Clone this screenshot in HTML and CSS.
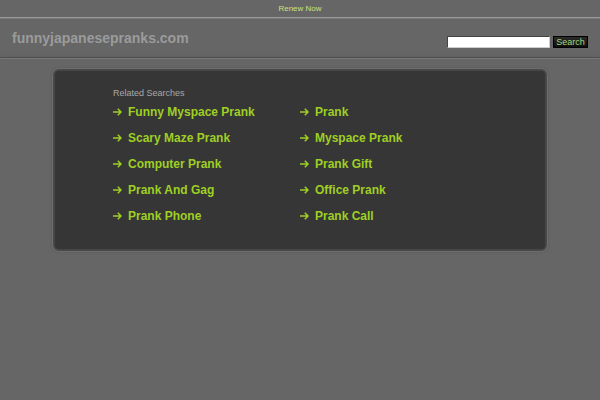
FILE: index.html
```html
<!DOCTYPE html>
<html lang="en">
<head>
    <meta name="viewport" content="width=device-width, initial-scale=1">
    <title>funnyjapanesepranks.com</title>
    <link rel="stylesheet" href="styles.css">
</head>
<body>

<div class="topbar">
    <a href="#" class="renew">Renew Now</a>
</div>

<div class="header">
    <div class="domain">funnyjapanesepranks.com</div>
    <form class="search" onsubmit="return false">
        <input type="text" class="search-input">
        <button type="submit" class="search-button">Search</button>
    </form>
</div>

<div class="content">
    <div class="box">
        <h4 class="box-title">Related Searches</h4>
        <ul class="links">
            <li><a href="#"><svg class="arrow" viewBox="0 0 9 8"><path d="M0 4H8M4.8 0.8L8 4L4.8 7.2"/></svg>Funny Myspace Prank</a></li>
            <li><a href="#"><svg class="arrow" viewBox="0 0 9 8"><path d="M0 4H8M4.8 0.8L8 4L4.8 7.2"/></svg>Scary Maze Prank</a></li>
            <li><a href="#"><svg class="arrow" viewBox="0 0 9 8"><path d="M0 4H8M4.8 0.8L8 4L4.8 7.2"/></svg>Computer Prank</a></li>
            <li><a href="#"><svg class="arrow" viewBox="0 0 9 8"><path d="M0 4H8M4.8 0.8L8 4L4.8 7.2"/></svg>Prank And Gag</a></li>
            <li><a href="#"><svg class="arrow" viewBox="0 0 9 8"><path d="M0 4H8M4.8 0.8L8 4L4.8 7.2"/></svg>Prank Phone</a></li>
            <li><a href="#"><svg class="arrow" viewBox="0 0 9 8"><path d="M0 4H8M4.8 0.8L8 4L4.8 7.2"/></svg>Prank</a></li>
            <li><a href="#"><svg class="arrow" viewBox="0 0 9 8"><path d="M0 4H8M4.8 0.8L8 4L4.8 7.2"/></svg>Myspace Prank</a></li>
            <li><a href="#"><svg class="arrow" viewBox="0 0 9 8"><path d="M0 4H8M4.8 0.8L8 4L4.8 7.2"/></svg>Prank Gift</a></li>
            <li><a href="#"><svg class="arrow" viewBox="0 0 9 8"><path d="M0 4H8M4.8 0.8L8 4L4.8 7.2"/></svg>Office Prank</a></li>
            <li><a href="#"><svg class="arrow" viewBox="0 0 9 8"><path d="M0 4H8M4.8 0.8L8 4L4.8 7.2"/></svg>Prank Call</a></li>
        </ul>
    </div>
</div>

</body>
</html>
```

FILE: styles.css
```css
body {
    margin: 0;
    background-color: #666666;
    font-family: "Liberation Sans", Arial, sans-serif;
}

.topbar {
    height: 17px;
    line-height: 17px;
    text-align: center;
    font-size: 8px;
    border-bottom: 1px solid #9a9a9a;
}

.renew {
    color: #c9e27c;
    text-decoration: none;
}

.header {
    height: 38px;
    display: flex;
    justify-content: space-between;
    align-items: flex-start;
    padding: 0 12px;
    border-top: 1px solid #777;
    border-bottom: 1px solid #555;
}

.domain {
    margin-top: 11px;
    font-size: 14px;
    font-weight: bold;
    color: #9b9b9b;
}

.search {
    display: flex;
    gap: 3px;
    margin-top: 17px;
}

.search-input {
    width: 103px;
    height: 12px;
    padding: 0;
    box-sizing: border-box;
    border: 1px solid #444;
    border-right-color: #ccc;
    border-bottom-color: #ccc;
    background-color: white;
}

.search-button {
    width: 35px;
    height: 12px;
    padding: 0;
    border: 1px solid #000;
    background: linear-gradient(#2c2c2c, #0c0c0c);
    color: #a6d77a;
    font-family: "Liberation Sans", Arial, sans-serif;
    font-size: 9px;
    line-height: 10px;
    cursor: pointer;
}

.content {
    position: relative;
    padding: 10px 0 12px;
    border-top: 1px solid #777;
    background-color: #666;
    box-shadow: 0 3px 6px rgba(0, 0, 0, 0.6);
}

.box {
    width: 494px;
    height: 182px;
    margin: 0 auto;
    box-sizing: border-box;
    padding: 17px 0 0 58px;
    background-color: #363636;
    border: 2px solid #474747;
    border-radius: 6px;
    box-shadow: 0 0 0 1px #6e6e6e, 0 0 3px 1px #575757;
}

.box-title {
    margin: 0;
    font-size: 9px;
    line-height: 11px;
    font-weight: normal;
    color: #a9a9a9;
}

.links {
    list-style-type: none;
    margin: 0;
    padding: 0;
    display: grid;
    grid-template-rows: repeat(5, 26px);
    grid-template-columns: 187px 187px;
    grid-auto-flow: column;
}

.links li {
    display: flex;
    align-items: center;
}

.links a {
    display: flex;
    align-items: center;
    color: #9fcf24;
    font-size: 12px;
    font-weight: bold;
    text-decoration: none;
}

.arrow {
    width: 9px;
    height: 8px;
    margin-right: 6px;
    fill: none;
    stroke: #9fcf24;
    stroke-width: 1.5;
}
```
